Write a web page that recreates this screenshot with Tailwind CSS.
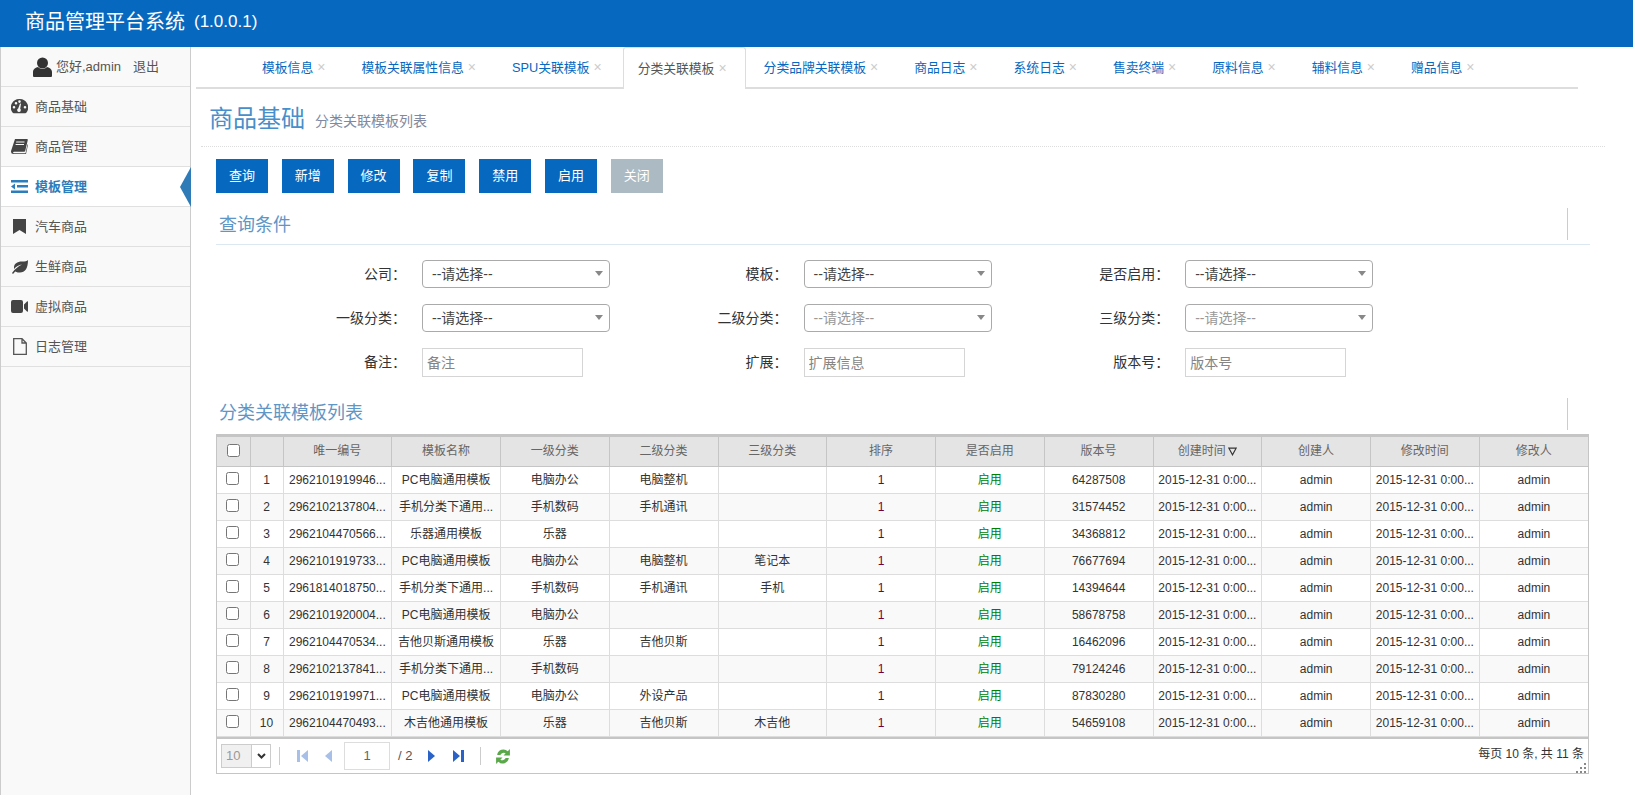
<!DOCTYPE html>
<html lang="zh-CN">
<head>
<meta charset="UTF-8">
<title>商品管理平台系统</title>
<script src="https://cdn.jsdelivr.net/npm/@tailwindcss/browser@4"></script>
</head>
<body class="h-[795px] overflow-hidden bg-white text-[#333] text-[13px] font-['Liberation_Sans','Noto_Sans_CJK_SC',sans-serif]">

<!-- top bar -->
<header class="h-[47px] bg-[#0768c0] pl-[25px] flex items-center pb-[4px] text-white text-[20px]">商品管理平台系统<span class="ml-[9px] text-[17px]">(1.0.0.1)</span></header>

<div class="flex h-[748px]">
  <!-- sidebar -->
  <aside class="w-[191px] shrink-0 bg-[#f9f9f9] border-x border-[#ccc]">
    <div class="h-[40px] border-b border-[#e0e0e0] flex items-center pl-[32px] text-[#555]">
      <svg class="w-[19px] h-[20px] mr-[4px] fill-[#333]" viewBox="0 0 19 20"><circle cx="9.5" cy="6" r="5.5"/><path d="M0 19v-4c0-3 3-4.500 5-5 1 1 3 2 4.500 2s3.500-1 4.500-2c2 .5 5 2 5 5v4q0 1-1 1H1q-1 0-1-1z"/></svg>
      <span>您好,admin</span><span class="ml-[12px]">退出</span>
    </div>
    <a class="h-[40px] border-b border-[#e0e0e0] flex items-center pl-[10px] text-[#555]">
      <svg class="w-[17px] h-[15px] mr-[7px] fill-[#444]" viewBox="0 0 17 15"><path d="M8.500 0a8.500 8.500 0 0 0-7 13.500q.5.7 1.200.7h11.600q.7 0 1.200-.7A8.500 8.500 0 0 0 8.500 0zM3 9.500a1.300 1.300 0 1 1 0-2.600 1.300 1.300 0 0 1 0 2.600zm2-4a1.300 1.300 0 1 1 0-2.600 1.300 1.300 0 0 1 0 2.600zm3.500-1.600a1.300 1.300 0 1 1 0-2.600 1.300 1.300 0 0 1 0 2.600zM9.800 11a1.800 1.800 0 1 1-2.600-1.500L9 4.500l1 .2-.8 5a1.800 1.800 0 0 1 .6 1.300zM14 9.500a1.300 1.300 0 1 1 0-2.600 1.300 1.300 0 0 1 0 2.600z"/></svg>
      <span>商品基础</span>
    </a>
    <a class="h-[40px] border-b border-[#e0e0e0] flex items-center pl-[10px] text-[#555]">
      <svg class="w-[17px] h-[15px] mr-[7px] fill-[#444]" viewBox="0 0 17 15"><path d="M4 0h12q1 0 .8 1l-2.600 11q-.2.8-1 .8H3q-1 0-.9.8t.9.7h11.500l2-9 .5.5-2 9.200H2.500Q0 15 0 12.800q0-.5.100-1zM5 3.500h8.500v-1H5.300zM4.500 6H13v-1H4.700z"/></svg>
      <span>商品管理</span>
    </a>
    <a class="relative h-[40px] border-b border-[#e0e0e0] bg-white flex items-center pl-[10px] text-[#2b7dbc] font-bold">
      <svg class="w-[17px] h-[13px] mr-[7px] fill-[#2b7dbc]" viewBox="0 0 17 13"><path d="M0 0h17v2.500H0zM6 5h11v2.500H6zM0 10.500h17V13H0zM4 3.500v6L0 6.500z"/></svg>
      <span>模板管理</span>
      <i class="absolute right-[-1px] top-0 w-0 h-0 border-y-[20px] border-y-transparent border-r-[11px] border-r-[#2e7bb8]"></i>
    </a>
    <a class="h-[40px] border-b border-[#e0e0e0] flex items-center pl-[12px] text-[#555]">
      <svg class="w-[13px] h-[15px] mr-[9px] fill-[#444]" viewBox="0 0 13 15"><path d="M0 0h13v15l-6.500-4L0 15z"/></svg>
      <span>汽车商品</span>
    </a>
    <a class="h-[40px] border-b border-[#e0e0e0] flex items-center pl-[10px] text-[#555]">
      <svg class="w-[17px] h-[14px] mr-[7px] fill-[#444]" viewBox="0 0 17 14"><path d="M17 0c-1 1-3 1.500-6 1.500C6 1.500 3 4 3 7.500q0 .8.200 1.500C5 6.500 8 5 11 4.500 8 6 4 8.500 1 13l1 1c.7-1 1.500-2 2.200-2.600C6 12.300 7.500 12.500 9 12.500c5 0 8-4 8-12.500z"/></svg>
      <span>生鲜商品</span>
    </a>
    <a class="h-[40px] border-b border-[#e0e0e0] flex items-center pl-[10px] text-[#555]">
      <svg class="w-[17px] h-[13px] mr-[7px] fill-[#444]" viewBox="0 0 17 13"><path d="M2 0h8q2 0 2 2v9q0 2-2 2H2q-2 0-2-2V2q0-2 2-2zM13 4.500 16 1.500q1-.8 1 .5v9q0 1.300-1 .5l-3-3z"/></svg>
      <span>虚拟商品</span>
    </a>
    <a class="h-[40px] border-b border-[#e0e0e0] flex items-center pl-[12px] text-[#555]">
      <svg class="w-[14px] h-[17px] mr-[8px] fill-none stroke-[#555]" stroke-width="1.300" viewBox="0 0 14 17"><path d="M.7.700h8.300l4.300 4.300v11.300H.7zM9 .7v4.300h4.300"/></svg>
      <span>日志管理</span>
    </a>
  </aside>

  <!-- main -->
  <main class="flex-1 min-w-0 pl-[5px]">
    <!-- tabs -->
    <nav class="h-[42px] w-[1382px] border-b-2 border-[#ddd] flex pl-[51px] text-[12.8px]">
      <a class="flex items-center pt-[1px] pl-[15px] pr-[18px] mr-[3px] text-[#0768c0]">模板信息<span class="ml-[4px] text-[#ccc] text-[14px]">×</span></a>
      <a class="flex items-center pt-[1px] pl-[15px] pr-[18px] mr-[3px] text-[#0768c0]">模板关联属性信息<span class="ml-[4px] text-[#ccc] text-[14px]">×</span></a>
      <a class="flex items-center pt-[1px] pl-[15px] pr-[18px] mr-[3px] text-[#0768c0]">SPU关联模板<span class="ml-[4px] text-[#ccc] text-[14px]">×</span></a>
      <a class="flex items-center pl-[14px] pr-[18px] mr-[3px] h-[42px] bg-white border border-[#ddd] border-b-0 rounded-t-[3px] text-[#555]">分类关联模板<span class="ml-[4px] text-[#ccc] text-[14px]">×</span></a>
      <a class="flex items-center pt-[1px] pl-[15px] pr-[18px] mr-[3px] text-[#0768c0]">分类品牌关联模板<span class="ml-[4px] text-[#ccc] text-[14px]">×</span></a>
      <a class="flex items-center pt-[1px] pl-[15px] pr-[18px] mr-[3px] text-[#0768c0]">商品日志<span class="ml-[4px] text-[#ccc] text-[14px]">×</span></a>
      <a class="flex items-center pt-[1px] pl-[15px] pr-[18px] mr-[3px] text-[#0768c0]">系统日志<span class="ml-[4px] text-[#ccc] text-[14px]">×</span></a>
      <a class="flex items-center pt-[1px] pl-[15px] pr-[18px] mr-[3px] text-[#0768c0]">售卖终端<span class="ml-[4px] text-[#ccc] text-[14px]">×</span></a>
      <a class="flex items-center pt-[1px] pl-[15px] pr-[18px] mr-[3px] text-[#0768c0]">原料信息<span class="ml-[4px] text-[#ccc] text-[14px]">×</span></a>
      <a class="flex items-center pt-[1px] pl-[15px] pr-[18px] mr-[3px] text-[#0768c0]">辅料信息<span class="ml-[4px] text-[#ccc] text-[14px]">×</span></a>
      <a class="flex items-center pt-[1px] pl-[15px] pr-[18px] mr-[3px] text-[#0768c0]">赠品信息<span class="ml-[4px] text-[#ccc] text-[14px]">×</span></a>
    </nav>

    <!-- page title -->
    <div class="h-[58px] w-[1404px] ml-[5px] border-b border-dotted border-[#ddd] flex items-center pl-[8px] pt-[3px]">
      <h1 class="text-[24px] font-normal text-[#478fca]">商品基础</h1>
      <small class="ml-[10px] mt-[5px] text-[14px] text-[#8089a0]">分类关联模板列表</small>
    </div>

    <div class="pl-[20px] w-[1394px]">
      <!-- buttons -->
      <div class="flex gap-[13.8px] mt-[12px] text-white text-[13px]">
        <button class="w-[52px] h-[34px] bg-[#0768c0]">查询</button>
        <button class="w-[52px] h-[34px] bg-[#0768c0]">新增</button>
        <button class="w-[52px] h-[34px] bg-[#0768c0]">修改</button>
        <button class="w-[52px] h-[34px] bg-[#0768c0]">复制</button>
        <button class="w-[52px] h-[34px] bg-[#0768c0]">禁用</button>
        <button class="w-[52px] h-[34px] bg-[#0768c0]">启用</button>
        <button class="w-[52px] h-[34px] bg-[#abbac3]">关闭</button>
      </div>

      <!-- search -->
      <div class="relative h-[35px] mt-[17px] pt-[2px] border-b border-[#dce8f1] pl-[3px] text-[18px] text-[#5e96c6]">查询条件<i class="absolute right-[22px] top-[-2px] h-[32px] border-l border-[#ccc]"></i></div>

      <div class="mt-[15px] grid grid-cols-[repeat(3,381.6px)] gap-y-[16px] text-[14px]">
        <div class="flex items-center"><label class="w-[190px] shrink-0 text-right">公司：</label><div class="relative ml-[16px] w-[188px] shrink-0 h-[28px] border border-[#aaa] rounded-[4px] pl-[9px] leading-[26px] text-[#444]">--请选择--<i class="absolute right-[6px] top-[10px] w-0 h-0 border-x-[4px] border-x-transparent border-t-[5px] border-t-[#888]"></i></div></div>
        <div class="flex items-center"><label class="w-[190px] shrink-0 text-right">模板：</label><div class="relative ml-[16px] w-[188px] shrink-0 h-[28px] border border-[#aaa] rounded-[4px] pl-[9px] leading-[26px] text-[#444]">--请选择--<i class="absolute right-[6px] top-[10px] w-0 h-0 border-x-[4px] border-x-transparent border-t-[5px] border-t-[#888]"></i></div></div>
        <div class="flex items-center"><label class="w-[190px] shrink-0 text-right">是否启用：</label><div class="relative ml-[16px] w-[188px] shrink-0 h-[28px] border border-[#aaa] rounded-[4px] pl-[9px] leading-[26px] text-[#444]">--请选择--<i class="absolute right-[6px] top-[10px] w-0 h-0 border-x-[4px] border-x-transparent border-t-[5px] border-t-[#888]"></i></div></div>

        <div class="flex items-center"><label class="w-[190px] shrink-0 text-right">一级分类：</label><div class="relative ml-[16px] w-[188px] shrink-0 h-[28px] border border-[#aaa] rounded-[4px] pl-[9px] leading-[26px] text-[#444]">--请选择--<i class="absolute right-[6px] top-[10px] w-0 h-0 border-x-[4px] border-x-transparent border-t-[5px] border-t-[#888]"></i></div></div>
        <div class="flex items-center"><label class="w-[190px] shrink-0 text-right">二级分类：</label><div class="relative ml-[16px] w-[188px] shrink-0 h-[28px] border border-[#aaa] rounded-[4px] pl-[9px] leading-[26px] text-[#999]">--请选择--<i class="absolute right-[6px] top-[10px] w-0 h-0 border-x-[4px] border-x-transparent border-t-[5px] border-t-[#888]"></i></div></div>
        <div class="flex items-center"><label class="w-[190px] shrink-0 text-right">三级分类：</label><div class="relative ml-[16px] w-[188px] shrink-0 h-[28px] border border-[#aaa] rounded-[4px] pl-[9px] leading-[26px] text-[#999]">--请选择--<i class="absolute right-[6px] top-[10px] w-0 h-0 border-x-[4px] border-x-transparent border-t-[5px] border-t-[#888]"></i></div></div>

        <div class="flex items-center"><label class="w-[190px] shrink-0 text-right">备注：</label><input class="ml-[16px] w-[161px] shrink-0 h-[29px] border border-[#d5d5d5] pl-[4px] placeholder:text-[#858585]" placeholder="备注"></div>
        <div class="flex items-center"><label class="w-[190px] shrink-0 text-right">扩展：</label><input class="ml-[16px] w-[161px] shrink-0 h-[29px] border border-[#d5d5d5] pl-[4px] placeholder:text-[#858585]" placeholder="扩展信息"></div>
        <div class="flex items-center"><label class="w-[190px] shrink-0 text-right">版本号：</label><input class="ml-[16px] w-[161px] shrink-0 h-[29px] border border-[#d5d5d5] pl-[4px] placeholder:text-[#858585]" placeholder="版本号"></div>
      </div>

      <div class="relative h-[32px] mt-[21px] pl-[3px] text-[18px] text-[#5e96c6] leading-[30px]">分类关联模板列表<i class="absolute right-[22px] top-0 h-[32px] border-l border-[#ccc]"></i></div>

      <!-- grid -->
      <div class="mt-[4px] w-[1373px] h-[340px] border border-[#c5c5c5] text-[12px]">
        <table class="w-full table-fixed border-collapse text-center">
          <colgroup><col class="w-[33px]"><col class="w-[33px]"><col><col><col><col><col><col><col><col><col><col><col><col></colgroup>
          <thead class="bg-[#e4e4e4] text-[#666]">
            <tr class="h-[30px]">
              <th class="font-normal border border-[#c5c5c5] border-l-0 border-t-2"><input type="checkbox" class="align-middle ml-[1px] mb-[3px]"></th>
              <th class="font-normal border border-[#c5c5c5] border-t-2"></th>
              <th class="font-normal border border-[#c5c5c5] border-t-2">唯一编号</th>
              <th class="font-normal border border-[#c5c5c5] border-t-2">模板名称</th>
              <th class="font-normal border border-[#c5c5c5] border-t-2">一级分类</th>
              <th class="font-normal border border-[#c5c5c5] border-t-2">二级分类</th>
              <th class="font-normal border border-[#c5c5c5] border-t-2">三级分类</th>
              <th class="font-normal border border-[#c5c5c5] border-t-2">排序</th>
              <th class="font-normal border border-[#c5c5c5] border-t-2">是否启用</th>
              <th class="font-normal border border-[#c5c5c5] border-t-2">版本号</th>
              <th class="font-normal border border-[#c5c5c5] border-t-2">创建时间<svg class="inline-block ml-[2px] w-[9px] h-[9px] align-[-0.5px] fill-none stroke-[#333]" viewBox="0 0 8 8"><path d="M.7 1h6.600L4 7z"/></svg></th>
              <th class="font-normal border border-[#c5c5c5] border-t-2">创建人</th>
              <th class="font-normal border border-[#c5c5c5] border-t-2">修改时间</th>
              <th class="font-normal border border-[#c5c5c5] border-t-2 border-r-0">修改人</th>
            </tr>
          </thead>
          <tbody class="[&_td]:border [&_td]:border-[#ddd] [&_td]:whitespace-nowrap [&_td]:overflow-hidden [&_tr]:h-[27px] [&_tr:nth-child(even)]:bg-[#f9f9f9]">
            <tr><td class="!border-l-0"><input type="checkbox" class="align-middle mr-[1px] mb-[3px]"></td><td>1</td><td>2962101919946...</td><td>PC电脑通用模板</td><td>电脑办公</td><td>电脑整机</td><td></td><td class="text-[#700040]">1</td><td class="text-[#008000]">启用</td><td>64287508</td><td>2015-12-31 0:00...</td><td>admin</td><td>2015-12-31 0:00...</td><td class="!border-r-0">admin</td></tr>
            <tr><td class="!border-l-0"><input type="checkbox" class="align-middle mr-[1px] mb-[3px]"></td><td>2</td><td>2962102137804...</td><td>手机分类下通用...</td><td>手机数码</td><td>手机通讯</td><td></td><td class="text-[#700040]">1</td><td class="text-[#008000]">启用</td><td>31574452</td><td>2015-12-31 0:00...</td><td>admin</td><td>2015-12-31 0:00...</td><td class="!border-r-0">admin</td></tr>
            <tr><td class="!border-l-0"><input type="checkbox" class="align-middle mr-[1px] mb-[3px]"></td><td>3</td><td>2962104470566...</td><td>乐器通用模板</td><td>乐器</td><td></td><td></td><td class="text-[#700040]">1</td><td class="text-[#008000]">启用</td><td>34368812</td><td>2015-12-31 0:00...</td><td>admin</td><td>2015-12-31 0:00...</td><td class="!border-r-0">admin</td></tr>
            <tr><td class="!border-l-0"><input type="checkbox" class="align-middle mr-[1px] mb-[3px]"></td><td>4</td><td>2962101919733...</td><td>PC电脑通用模板</td><td>电脑办公</td><td>电脑整机</td><td>笔记本</td><td class="text-[#700040]">1</td><td class="text-[#008000]">启用</td><td>76677694</td><td>2015-12-31 0:00...</td><td>admin</td><td>2015-12-31 0:00...</td><td class="!border-r-0">admin</td></tr>
            <tr><td class="!border-l-0"><input type="checkbox" class="align-middle mr-[1px] mb-[3px]"></td><td>5</td><td>2961814018750...</td><td>手机分类下通用...</td><td>手机数码</td><td>手机通讯</td><td>手机</td><td class="text-[#700040]">1</td><td class="text-[#008000]">启用</td><td>14394644</td><td>2015-12-31 0:00...</td><td>admin</td><td>2015-12-31 0:00...</td><td class="!border-r-0">admin</td></tr>
            <tr><td class="!border-l-0"><input type="checkbox" class="align-middle mr-[1px] mb-[3px]"></td><td>6</td><td>2962101920004...</td><td>PC电脑通用模板</td><td>电脑办公</td><td></td><td></td><td class="text-[#700040]">1</td><td class="text-[#008000]">启用</td><td>58678758</td><td>2015-12-31 0:00...</td><td>admin</td><td>2015-12-31 0:00...</td><td class="!border-r-0">admin</td></tr>
            <tr><td class="!border-l-0"><input type="checkbox" class="align-middle mr-[1px] mb-[3px]"></td><td>7</td><td>2962104470534...</td><td>吉他贝斯通用模板</td><td>乐器</td><td>吉他贝斯</td><td></td><td class="text-[#700040]">1</td><td class="text-[#008000]">启用</td><td>16462096</td><td>2015-12-31 0:00...</td><td>admin</td><td>2015-12-31 0:00...</td><td class="!border-r-0">admin</td></tr>
            <tr><td class="!border-l-0"><input type="checkbox" class="align-middle mr-[1px] mb-[3px]"></td><td>8</td><td>2962102137841...</td><td>手机分类下通用...</td><td>手机数码</td><td></td><td></td><td class="text-[#700040]">1</td><td class="text-[#008000]">启用</td><td>79124246</td><td>2015-12-31 0:00...</td><td>admin</td><td>2015-12-31 0:00...</td><td class="!border-r-0">admin</td></tr>
            <tr><td class="!border-l-0"><input type="checkbox" class="align-middle mr-[1px] mb-[3px]"></td><td>9</td><td>2962101919971...</td><td>PC电脑通用模板</td><td>电脑办公</td><td>外设产品</td><td></td><td class="text-[#700040]">1</td><td class="text-[#008000]">启用</td><td>87830280</td><td>2015-12-31 0:00...</td><td>admin</td><td>2015-12-31 0:00...</td><td class="!border-r-0">admin</td></tr>
            <tr><td class="!border-l-0"><input type="checkbox" class="align-middle mr-[1px] mb-[3px]"></td><td>10</td><td>2962104470493...</td><td>木吉他通用模板</td><td>乐器</td><td>吉他贝斯</td><td>木吉他</td><td class="text-[#700040]">1</td><td class="text-[#008000]">启用</td><td>54659108</td><td>2015-12-31 0:00...</td><td>admin</td><td>2015-12-31 0:00...</td><td class="!border-r-0">admin</td></tr>
          </tbody>
        </table>
        <!-- pager -->
        <div class="relative h-[37px] border-t-2 border-[#c5c5c5] flex items-center pl-[4px]">
          <div class="flex w-[50px] h-[24px] border border-[#ccc]"><span class="flex-1 bg-[#f0f0f0] text-[#999] text-[13px] leading-[22px] pl-[4px]">10</span><span class="w-[19px] border-l border-[#ccc] flex items-center justify-center"><svg class="w-[9px] h-[6px] fill-none stroke-[#333]" stroke-width="2" viewBox="0 0 9 6"><path d="M1 1l3.500 3.500L8 1"/></svg></span></div>
          <i class="ml-[8px] h-[18px] border-l border-[#ccc]"></i>
          <svg class="ml-[17px] w-[11px] h-[12px]" viewBox="0 0 11 12"><path fill="#a8c0e8" d="M0 0h3v12H0zM11 0v12L4 6z"/></svg>
          <svg class="ml-[17px] w-[7px] h-[12px]" viewBox="0 0 7 12"><path fill="#a8c0e8" d="M7 0v12L0 6z"/></svg>
          <div class="ml-[12px] w-[46px] h-[28px] border border-[#ddd] text-center text-[13px] leading-[26px] text-[#666]">1</div>
          <span class="ml-[8px] text-[13px] text-[#555]">/ 2</span>
          <svg class="ml-[16px] w-[7px] h-[12px]" viewBox="0 0 7 12"><path fill="#2a62c8" d="M0 0v12l7-6z"/></svg>
          <svg class="ml-[18px] w-[11px] h-[12px]" viewBox="0 0 11 12"><path fill="#2a62c8" d="M0 0v12l7-6zM8 0h3v12H8z"/></svg>
          <i class="ml-[16px] h-[18px] border-l border-[#ccc]"></i>
          <svg class="ml-[13px] w-[18px] h-[17px]" viewBox="1 0 15 16"><path fill="#5aa84a" d="M3 6.500A6 6 0 0 1 13 3l2-2v6h-6l2-2a3.500 3.500 0 0 0-5 1.500zM14 9.500A6 6 0 0 1 4 13l-2 2V9h6l-2 2a3.500 3.500 0 0 0 5-1.500z"/></svg>
          <span class="absolute right-[4px] top-[6px] text-[#333]">每页 10 条, 共 11 条</span>
          <svg class="absolute right-[2px] bottom-[1px] w-[10px] h-[10px] fill-[#888]" viewBox="0 0 10 10"><rect x="8" y="0" width="2" height="2"/><rect x="4" y="4" width="2" height="2"/><rect x="8" y="4" width="2" height="2"/><rect x="0" y="8" width="2" height="2"/><rect x="4" y="8" width="2" height="2"/><rect x="8" y="8" width="2" height="2"/></svg>
        </div>
      </div>
    </div>
  </main>
</div>
</body>
</html>
